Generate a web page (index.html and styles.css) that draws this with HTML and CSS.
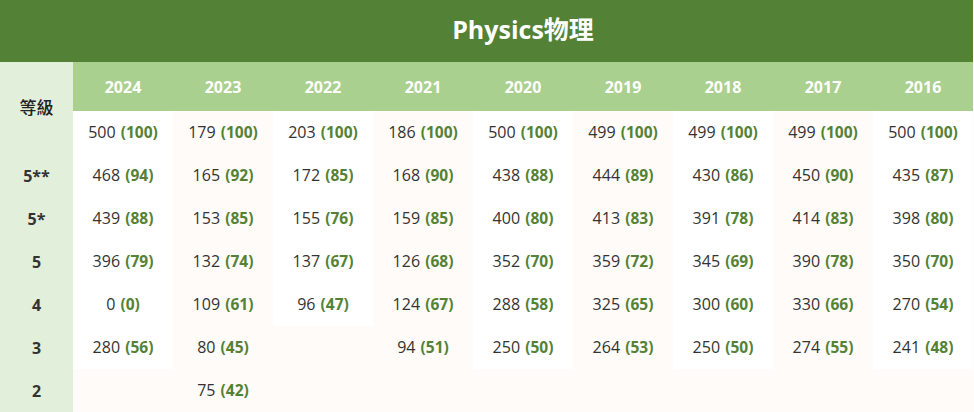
FILE: index.html
```html
<!DOCTYPE html>
<html lang="zh-Hant">
<head>
<meta charset="utf-8">
<title>Physics物理</title>
<link rel="stylesheet" href="styles.css">
</head>
<body>
<div class="page">
  <div class="title">Physics物理</div>
  <table class="grades">
    <colgroup>
      <col class="c-label">
      <col><col><col><col><col><col><col><col><col>
    </colgroup>
    <tbody>
      <tr class="years">
        <th class="label head-label" rowspan="2">等級</th>
        <th>2024</th><th>2023</th><th>2022</th><th>2021</th><th>2020</th><th>2019</th><th>2018</th><th>2017</th><th>2016</th>
      </tr>
      <tr class="row">
        <td class="w">500 <b>(100)</b></td><td class="c">179 <b>(100)</b></td><td class="w">203 <b>(100)</b></td><td class="c">186 <b>(100)</b></td><td class="w">500 <b>(100)</b></td><td class="c">499 <b>(100)</b></td><td class="w">499 <b>(100)</b></td><td class="c">499 <b>(100)</b></td><td class="w">500 <b>(100)</b></td>
      </tr>
      <tr class="row">
        <th class="label">5**</th>
        <td class="w">468 <b>(94)</b></td><td class="c">165 <b>(92)</b></td><td class="w">172 <b>(85)</b></td><td class="c">168 <b>(90)</b></td><td class="w">438 <b>(88)</b></td><td class="c">444 <b>(89)</b></td><td class="w">430 <b>(86)</b></td><td class="c">450 <b>(90)</b></td><td class="w">435 <b>(87)</b></td>
      </tr>
      <tr class="row">
        <th class="label">5*</th>
        <td class="w">439 <b>(88)</b></td><td class="c">153 <b>(85)</b></td><td class="w">155 <b>(76)</b></td><td class="c">159 <b>(85)</b></td><td class="w">400 <b>(80)</b></td><td class="c">413 <b>(83)</b></td><td class="w">391 <b>(78)</b></td><td class="c">414 <b>(83)</b></td><td class="w">398 <b>(80)</b></td>
      </tr>
      <tr class="row">
        <th class="label">5</th>
        <td class="w">396 <b>(79)</b></td><td class="c">132 <b>(74)</b></td><td class="w">137 <b>(67)</b></td><td class="c">126 <b>(68)</b></td><td class="w">352 <b>(70)</b></td><td class="c">359 <b>(72)</b></td><td class="w">345 <b>(69)</b></td><td class="c">390 <b>(78)</b></td><td class="w">350 <b>(70)</b></td>
      </tr>
      <tr class="row">
        <th class="label">4</th>
        <td class="w">0 <b>(0)</b></td><td class="c">109 <b>(61)</b></td><td class="w">96 <b>(47)</b></td><td class="c">124 <b>(67)</b></td><td class="w">288 <b>(58)</b></td><td class="c">325 <b>(65)</b></td><td class="w">300 <b>(60)</b></td><td class="c">330 <b>(66)</b></td><td class="w">270 <b>(54)</b></td>
      </tr>
      <tr class="row">
        <th class="label">3</th>
        <td class="w">280 <b>(56)</b></td><td class="c">80 <b>(45)</b></td><td class="c"></td><td class="c">94 <b>(51)</b></td><td class="w">250 <b>(50)</b></td><td class="c">264 <b>(53)</b></td><td class="w">250 <b>(50)</b></td><td class="c">274 <b>(55)</b></td><td class="w">241 <b>(48)</b></td>
      </tr>
      <tr class="row">
        <th class="label">2</th>
        <td class="c"></td><td class="c">75 <b>(42)</b></td><td class="c"></td><td class="c"></td><td class="c"></td><td class="c"></td><td class="c"></td><td class="c"></td><td class="c"></td>
      </tr>
    </tbody>
  </table>
</div>
</body>
</html>
```

FILE: styles.css
```css
html, body {
  margin: 0;
  padding: 0;
  background: #fffbf8;
}

body {
  font-family: "Open Sans", "Noto Sans CJK TC", sans-serif;
  color: #333333;
}

.page {
  width: 973px;
}

.title {
  height: 62px;
  box-sizing: border-box;
  padding: 0 0 6px 73px;
  background: #538135;
  color: #ffffff;
  font-size: 25px;
  font-weight: 700;
  display: flex;
  align-items: center;
  justify-content: center;
  font-family: "Open Sans", "Noto Sans CJK TC", sans-serif;
}

.grades {
  width: 973px;
  border-collapse: collapse;
  border-spacing: 0;
  table-layout: fixed;
}

.c-label {
  width: 73px;
}

.grades th,
.grades td {
  padding: 0;
  text-align: center;
  vertical-align: middle;
}

.years th {
  height: 49px;
  background: #a9d08e;
  color: #ffffff;
  font-size: 16px;
  font-weight: 700;
}

.grades .label {
  background: #e2efda;
  color: #333333;
  font-size: 16px;
  font-weight: 700;
}

.grades .head-label {
  font-family: "Noto Sans CJK TC", sans-serif;
  font-weight: 500;
  color: #222222;
  font-size: 17px;
  background: #e2efda;
  padding-bottom: 4px;
}

.row {
  height: 43px;
}

.grades td {
  font-size: 16px;
  font-weight: 400;
  color: #333333;
  padding-bottom: 2px;
}

.grades td b {
  color: #548235;
  font-size: 15.5px;
  font-weight: 700;
  margin-left: 1px;
}

.w {
  background: #ffffff;
}

.c {
  background: #fffbf8;
}
```
